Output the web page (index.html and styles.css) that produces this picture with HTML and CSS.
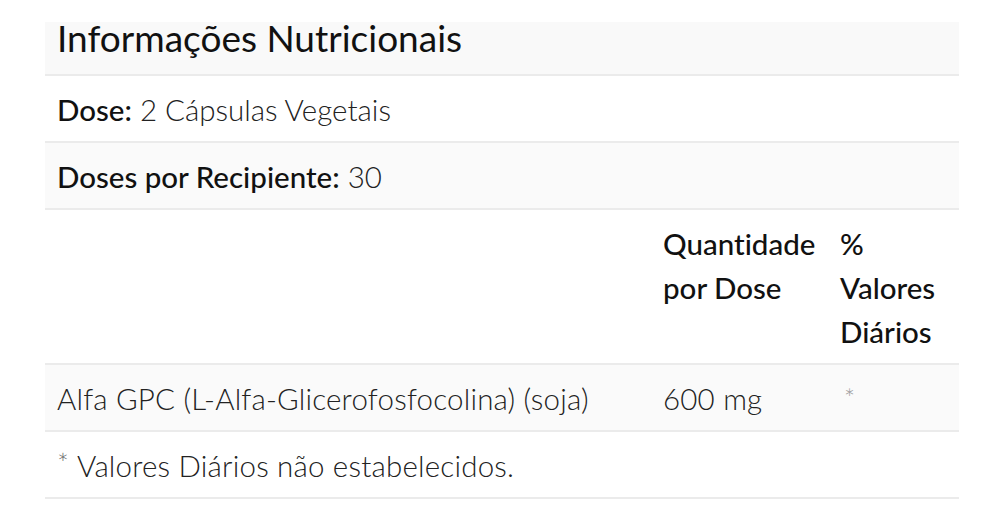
FILE: index.html
```html
<!DOCTYPE html>
<html lang="pt">
<head>
<meta charset="utf-8">
<link rel="stylesheet" href="styles.css">
</head>
<body>
<div class="wrap">
<table class="nut">
  <colgroup>
    <col class="c1"><col class="c2"><col class="c3">
  </colgroup>
  <tbody>
    <tr class="title"><th colspan="3">Informações Nutricionais</th></tr>
    <tr><td colspan="3"><b>Dose:</b> 2 Cápsulas Vegetais</td></tr>
    <tr class="alt"><td colspan="3"><b>Doses por Recipiente:</b> 30</td></tr>
    <tr class="head"><td></td><td><b>Quantidade por Dose</b></td><td><b>% Valores Diários</b></td></tr>
    <tr class="alt"><td><span class="val">Alfa GPC (L-Alfa-Glicerofosfocolina) (soja)</span></td><td><span class="val">600 mg</span></td><td><span class="ast">*</span></td></tr>
    <tr><td colspan="3"><span class="ast2">*</span> <span class="val">Valores Diários não estabelecidos.</span></td></tr>
  </tbody>
</table>
</div>
</body>
</html>
```
FILE: styles.css
```css
html, body {
  margin: 0;
  padding: 0;
  background: #fff;
}
.wrap {
  padding: 22px 45px 0 45px;
}
.nut {
  width: 914px;
  border-collapse: collapse;
  table-layout: fixed;
  font-family: Lato, "Open Sans", sans-serif;
  font-size: 29.5px;
  color: #222;
  font-variant-ligatures: none;
}
.c1 { width: 606px; }
.c2 { width: 177px; }
.c3 { width: 131px; }
.nut th, .nut td {
  text-align: left;
  vertical-align: top;
  padding: 12px 12px 9px 12px;
  line-height: 44px;
  font-weight: 300;
  border-bottom: 2px solid #ebebeb;
}
.nut b {
  font-weight: 500;
  color: #111;
}
.val {
  letter-spacing: 0.2px;
}
.nut .title th {
  background: #f9f9f9;
  font-size: 37px;
  font-weight: 400;
  color: #111;
  padding: 0 12px 20px 12px;
  line-height: 32px;
}
.nut tr.alt td {
  background: #fafafa;
}
.ast {
  font-size: 26px;
  line-height: 0;
  color: #999;
  position: relative;
  top: -2px;
  margin-left: 4px;
}
.ast2 {
  font-size: 28px;
  line-height: 0;
  color: #666;
  position: relative;
  top: -4px;
}
```
